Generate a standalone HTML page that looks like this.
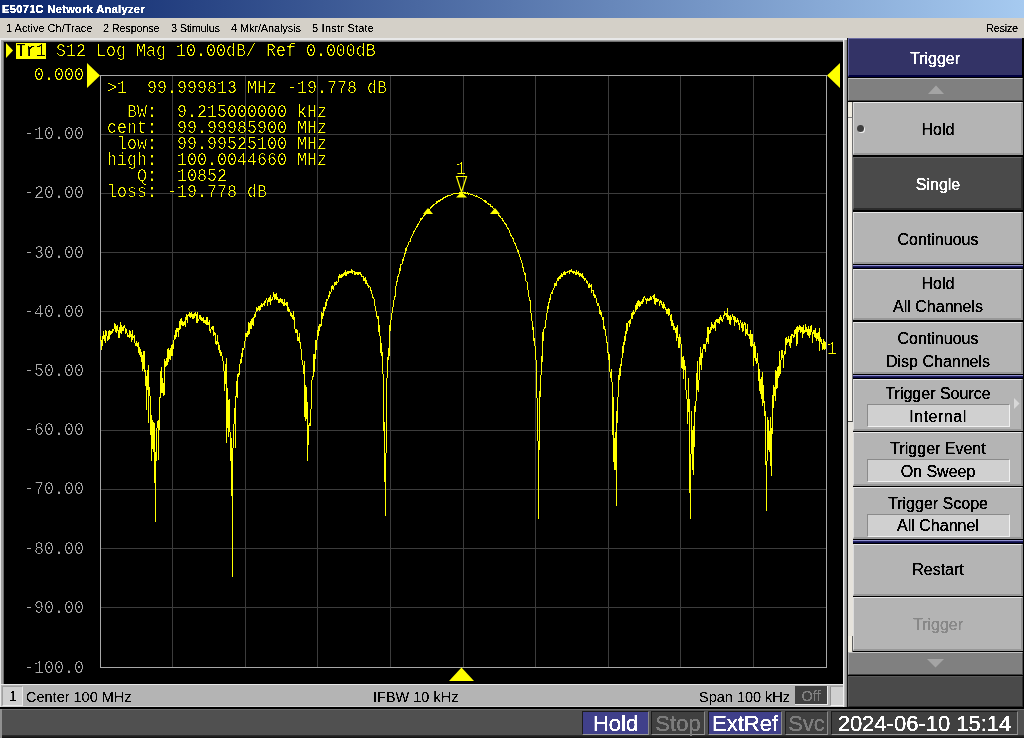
<!DOCTYPE html>
<html><head><meta charset="utf-8">
<style>
*{margin:0;padding:0;box-sizing:border-box}
html,body{width:1024px;height:738px;overflow:hidden;background:#d4d0c8;position:relative}
div{position:absolute}
.sans{font-family:"Liberation Sans",sans-serif}
.mono{font-family:"Liberation Mono",monospace;font-size:16.67px;line-height:20px;color:#ffff00;white-space:pre;transform:scaleY(1.09);transform-origin:0 0}
#title{left:0;top:0;width:1024px;height:18px;background:linear-gradient(to right,#0a246a,#a6caf0)}
#title span{position:absolute;left:2px;top:2px;font:bold 11px "Liberation Sans",sans-serif;letter-spacing:0.36px;color:#fff;line-height:14px;white-space:nowrap}
#menu{left:0;top:18px;width:1024px;height:20px;background:#d4d0c8;font:11px "Liberation Sans",sans-serif;color:#000}
#menu span{position:absolute;top:4px;line-height:12px;white-space:nowrap}
#chart{left:4px;top:42px;width:839px;height:642px;background:#000;overflow:hidden}
.sk{left:853px;width:171px;background:#b4b4b4;border-top:1px solid #e8e8e8;border-left:1px solid #d8d8d8;border-right:2px solid #404040;border-bottom:1px solid #404040;font:16px "Liberation Sans",sans-serif;color:#000;text-align:center}
.sk.dark{background:#4a4a4a;color:#fff;border-top-color:#909090;border-left-color:#707070;border-right-color:#202020;border-bottom-color:#202020}
.sk .l{position:absolute;left:0;width:100%;line-height:18px;white-space:nowrap}
.sk .box{position:absolute;left:13px;width:143px;height:22px;background:#d2d2d2;border-top:1px solid #909090;border-left:1px solid #909090;border-bottom:1px solid #f0f0f0;border-right:1px solid #f0f0f0;line-height:20px}
.skt{left:853px;width:170px;text-align:center;font:16px "Liberation Sans",sans-serif;line-height:18px;white-space:nowrap}
.bt{top:711px;height:24px;font:22px "Liberation Sans",sans-serif;line-height:22px;padding-top:1px;border-top:1px solid #1c1c1c;border-left:1px solid #1c1c1c;border-bottom:1px solid #9a9a9a;border-right:1px solid #8a8a8a;text-align:center;white-space:nowrap;overflow:hidden}
</style></head><body>
<div id="title"></div>
<div id="menu"></div>








<div style="left:0;top:38px;width:848px;height:669px;background:#e8e8e8"></div>
<div style="left:1px;top:40px;width:846px;height:645px;background:#a0a0a0"></div>
<div style="left:3px;top:41px;width:842px;height:643px;background:#707070"></div>
<div style="left:843px;top:40px;width:1px;height:667px;background:#f0f0f0"></div>
<div style="left:844px;top:40px;width:3px;height:667px;background:linear-gradient(to right,#c8c8c8,#808080)"></div>
<div style="left:847px;top:38px;width:1px;height:669px;background:#101010"></div>
<div id="chart"></div>
<svg style="position:absolute;left:0;top:0" width="1024" height="738" viewBox="0 0 1024 738">
<g stroke="#3c3c3c" stroke-width="1" shape-rendering="crispEdges">
<line x1="172.5" y1="75.0" x2="172.5" y2="667.0"/>
<line x1="100.0" y1="134.5" x2="826.0" y2="134.5"/>
<line x1="245.5" y1="75.0" x2="245.5" y2="667.0"/>
<line x1="100.0" y1="193.5" x2="826.0" y2="193.5"/>
<line x1="317.5" y1="75.0" x2="317.5" y2="667.0"/>
<line x1="100.0" y1="252.5" x2="826.0" y2="252.5"/>
<line x1="390.5" y1="75.0" x2="390.5" y2="667.0"/>
<line x1="100.0" y1="311.5" x2="826.0" y2="311.5"/>
<line x1="463.5" y1="75.0" x2="463.5" y2="667.0"/>
<line x1="100.0" y1="371.5" x2="826.0" y2="371.5"/>
<line x1="535.5" y1="75.0" x2="535.5" y2="667.0"/>
<line x1="100.0" y1="430.5" x2="826.0" y2="430.5"/>
<line x1="608.5" y1="75.0" x2="608.5" y2="667.0"/>
<line x1="100.0" y1="489.5" x2="826.0" y2="489.5"/>
<line x1="680.5" y1="75.0" x2="680.5" y2="667.0"/>
<line x1="100.0" y1="548.5" x2="826.0" y2="548.5"/>
<line x1="753.5" y1="75.0" x2="753.5" y2="667.0"/>
<line x1="100.0" y1="607.5" x2="826.0" y2="607.5"/>
</g>
<rect x="100.5" y="75.5" width="726" height="592" fill="none" stroke="#a8a8a8" stroke-width="1" shape-rendering="crispEdges"/>
<polyline fill="none" stroke="#ffff00" stroke-width="1" shape-rendering="crispEdges" points="100.00,340.16 100.45,336.50 100.91,338.22 101.36,348.25 101.81,349.84 102.27,340.97 102.72,336.80 103.18,337.53 103.63,330.81 104.08,335.42 104.54,335.37 104.99,341.15 105.44,342.01 105.90,329.74 106.35,335.77 106.81,332.07 107.26,341.31 107.71,336.43 108.17,339.98 108.62,337.02 109.08,329.57 109.53,339.27 109.98,334.70 110.44,331.54 110.89,334.60 111.34,332.19 111.80,332.20 112.25,329.37 112.70,332.52 113.16,329.39 113.61,329.90 114.07,328.40 114.52,328.51 114.97,323.49 115.43,332.30 115.88,325.00 116.34,330.23 116.79,333.22 117.24,324.63 117.70,330.80 118.15,330.70 118.60,334.61 119.06,338.04 119.51,326.75 119.97,333.95 120.42,326.32 120.87,322.10 121.33,329.82 121.78,334.01 122.23,328.13 122.69,326.77 123.14,331.00 123.59,330.07 124.05,325.24 124.50,325.64 124.96,327.51 125.41,334.01 125.86,331.58 126.32,328.64 126.77,332.21 127.22,334.31 127.68,335.98 128.13,335.72 128.59,336.17 129.04,335.86 129.49,329.65 129.95,337.66 130.40,331.46 130.85,333.72 131.31,335.49 131.76,340.65 132.22,339.71 132.67,329.77 133.12,337.93 133.58,337.00 134.03,337.05 134.49,334.85 134.94,342.94 135.39,345.63 135.85,343.61 136.30,345.64 136.75,341.07 137.21,344.91 137.66,345.79 138.12,347.30 138.57,342.21 139.02,353.34 139.48,354.04 139.93,347.35 140.38,354.51 140.84,352.94 141.29,361.64 141.75,352.17 142.20,356.52 142.65,370.77 143.11,368.11 143.56,361.17 144.01,350.67 144.47,362.45 144.92,370.44 145.38,379.54 145.83,370.00 146.28,409.57 146.74,376.39 147.19,385.19 147.64,390.09 148.10,364.83 148.55,422.88 149.00,392.92 149.46,395.72 149.91,387.21 150.37,429.02 150.82,415.65 151.27,461.49 151.73,415.21 152.18,423.02 152.63,429.81 153.09,452.42 153.54,445.18 154.00,422.43 154.45,451.03 154.90,471.33 155.36,521.90 155.81,452.24 156.26,460.84 156.72,430.50 157.17,426.66 157.63,421.06 158.08,420.69 158.53,459.68 158.99,430.83 159.44,406.78 159.89,407.03 160.35,370.61 160.80,388.00 161.26,393.13 161.71,366.89 162.16,384.59 162.62,388.35 163.07,393.20 163.53,383.51 163.98,395.95 164.43,390.07 164.89,358.68 165.34,366.74 165.79,365.58 166.25,365.36 166.70,358.27 167.16,365.24 167.61,362.42 168.06,347.78 168.52,361.87 168.97,349.56 169.42,358.69 169.88,354.00 170.33,348.38 170.78,360.21 171.24,351.35 171.69,345.09 172.15,344.95 172.60,356.39 173.05,348.60 173.51,344.84 173.96,340.01 174.41,339.80 174.87,337.60 175.32,329.65 175.78,339.05 176.23,335.84 176.68,327.83 177.14,328.83 177.59,330.48 178.05,332.01 178.50,337.09 178.95,328.86 179.41,321.39 179.86,330.03 180.31,326.42 180.77,320.24 181.22,318.05 181.68,321.26 182.13,325.92 182.58,321.17 183.04,325.58 183.49,321.94 183.94,323.06 184.40,324.38 184.85,323.39 185.31,317.46 185.76,327.26 186.21,314.15 186.67,318.83 187.12,316.28 187.57,322.94 188.03,314.70 188.48,315.33 188.94,314.75 189.39,313.84 189.84,315.92 190.30,318.08 190.75,314.39 191.20,312.13 191.66,316.07 192.11,316.64 192.56,318.80 193.02,314.01 193.47,315.79 193.93,318.93 194.38,313.16 194.83,315.82 195.29,315.05 195.74,311.94 196.19,315.26 196.65,319.64 197.10,323.42 197.56,311.99 198.01,319.19 198.46,319.87 198.92,320.33 199.37,315.24 199.82,317.70 200.28,315.12 200.73,318.89 201.19,321.17 201.64,316.77 202.09,318.34 202.55,320.71 203.00,320.66 203.45,316.57 203.91,323.33 204.36,320.81 204.82,320.20 205.27,320.22 205.72,322.82 206.18,324.47 206.63,317.24 207.08,318.84 207.54,316.61 207.99,324.48 208.45,324.74 208.90,322.80 209.35,320.50 209.81,330.16 210.26,332.12 210.72,332.61 211.17,327.53 211.62,328.65 212.08,329.36 212.53,328.97 212.98,325.88 213.44,329.11 213.89,335.90 214.34,333.40 214.80,332.39 215.25,334.38 215.71,343.52 216.16,344.74 216.61,344.31 217.07,340.91 217.52,335.15 217.97,343.74 218.43,342.45 218.88,348.88 219.34,352.49 219.79,344.68 220.24,356.38 220.70,352.57 221.15,354.12 221.60,352.57 222.06,355.97 222.51,360.73 222.97,361.19 223.42,362.45 223.87,361.11 224.33,391.23 224.78,370.86 225.24,383.61 225.69,379.37 226.14,358.23 226.60,443.04 227.05,391.11 227.50,388.54 227.96,426.66 228.41,436.50 228.87,400.86 229.32,399.25 229.77,405.34 230.23,456.04 230.68,461.33 231.13,437.82 231.59,457.01 232.04,498.79 232.50,576.70 232.95,451.06 233.40,431.40 233.86,427.88 234.31,415.71 234.76,409.52 235.22,407.54 235.67,448.05 236.12,382.13 236.58,380.66 237.03,397.57 237.49,374.13 237.94,377.27 238.39,376.62 238.85,372.90 239.30,375.15 239.75,365.78 240.21,363.03 240.66,359.21 241.12,362.61 241.57,353.23 242.02,356.85 242.48,354.16 242.93,348.33 243.38,349.45 243.84,349.52 244.29,345.39 244.75,344.18 245.20,338.86 245.65,334.65 246.11,332.88 246.56,337.32 247.01,334.37 247.47,330.69 247.92,337.27 248.38,325.83 248.83,323.25 249.28,323.97 249.74,333.86 250.19,323.22 250.64,329.41 251.10,318.91 251.55,328.49 252.01,324.70 252.46,317.72 252.91,322.41 253.37,326.25 253.82,319.26 254.28,313.87 254.73,317.97 255.18,316.82 255.64,312.31 256.09,312.02 256.54,307.96 257.00,308.26 257.45,310.86 257.90,311.04 258.36,305.88 258.81,309.81 259.27,310.32 259.72,305.70 260.17,307.86 260.63,309.75 261.08,303.79 261.53,302.63 261.99,307.29 262.44,304.67 262.90,304.51 263.35,303.33 263.80,303.68 264.26,305.89 264.71,301.84 265.16,302.29 265.62,300.91 266.07,299.50 266.53,298.85 266.98,299.49 267.43,306.30 267.89,302.31 268.34,299.57 268.79,297.64 269.25,301.34 269.70,300.97 270.16,295.48 270.61,304.85 271.06,299.62 271.52,300.30 271.97,299.64 272.42,299.48 272.88,297.28 273.33,296.58 273.79,292.35 274.24,294.94 274.69,298.81 275.15,298.21 275.60,296.57 276.06,293.37 276.51,299.42 276.96,298.27 277.42,299.70 277.87,296.94 278.32,302.54 278.78,299.49 279.23,302.99 279.69,299.72 280.14,298.80 280.59,301.77 281.05,301.61 281.50,299.03 281.95,302.16 282.41,301.00 282.86,302.77 283.31,305.33 283.77,304.54 284.22,299.12 284.68,305.01 285.13,304.90 285.58,302.66 286.04,305.18 286.49,305.41 286.94,301.83 287.40,305.48 287.85,310.86 288.31,307.27 288.76,311.81 289.21,311.82 289.67,308.77 290.12,312.47 290.57,314.05 291.03,316.16 291.48,314.96 291.94,317.11 292.39,314.60 292.84,318.00 293.30,320.30 293.75,311.46 294.20,321.04 294.66,325.91 295.11,329.63 295.57,330.77 296.02,333.23 296.47,329.78 296.93,330.80 297.38,330.49 297.84,339.34 298.29,338.43 298.74,341.43 299.20,333.41 299.65,342.37 300.10,343.08 300.56,341.93 301.01,349.38 301.47,353.97 301.92,359.94 302.37,362.44 302.83,363.83 303.28,367.53 303.73,374.40 304.19,360.90 304.64,398.22 305.10,421.32 305.55,390.10 306.00,384.70 306.46,418.91 306.91,404.10 307.36,402.43 307.82,460.80 308.27,425.28 308.73,425.28 309.18,425.28 309.63,423.34 310.09,425.28 310.54,425.28 310.99,410.09 311.45,384.20 311.90,380.29 312.36,378.80 312.81,376.94 313.26,376.97 313.72,353.83 314.17,354.86 314.62,371.92 315.08,357.08 315.53,353.04 315.99,339.97 316.44,349.95 316.89,343.68 317.35,331.76 317.80,330.56 318.25,336.03 318.71,325.68 319.16,330.90 319.62,324.54 320.07,326.83 320.52,325.51 320.98,326.72 321.43,313.26 321.88,312.54 322.34,314.79 322.79,318.55 323.25,313.12 323.70,306.77 324.15,311.02 324.61,307.17 325.06,309.15 325.51,301.82 325.97,305.59 326.42,305.29 326.88,298.68 327.33,300.00 327.78,299.51 328.24,297.86 328.69,294.60 329.14,297.23 329.60,292.48 330.05,293.29 330.50,293.30 330.96,292.05 331.41,291.63 331.87,286.46 332.32,284.85 332.77,288.32 333.23,287.75 333.68,288.84 334.13,285.28 334.59,284.66 335.04,281.85 335.50,284.19 335.95,285.15 336.40,281.63 336.86,282.29 337.31,282.89 337.76,282.29 338.22,281.24 338.67,280.84 339.13,274.14 339.58,275.72 340.03,278.42 340.49,275.08 340.94,278.35 341.39,275.76 341.85,273.99 342.30,276.94 342.76,274.52 343.21,273.69 343.66,275.73 344.12,274.09 344.57,272.51 345.02,272.39 345.48,271.37 345.93,275.47 346.39,274.80 346.84,272.90 347.29,271.76 347.75,273.05 348.20,272.04 348.65,273.16 349.11,272.80 349.56,271.98 350.02,271.46 350.47,272.51 350.92,271.68 351.38,269.57 351.83,271.97 352.28,273.94 352.74,271.13 353.19,271.95 353.65,271.22 354.10,272.11 354.55,271.46 355.01,275.05 355.46,272.67 355.91,272.25 356.37,272.78 356.82,272.69 357.28,274.71 357.73,272.08 358.18,272.15 358.64,274.20 359.09,273.49 359.55,273.24 360.00,271.96 360.45,274.73 360.91,274.26 361.36,277.03 361.81,274.48 362.27,276.99 362.72,276.77 363.18,276.44 363.63,279.81 364.08,280.66 364.54,278.59 364.99,279.37 365.44,277.29 365.90,282.50 366.35,281.56 366.81,284.41 367.26,282.66 367.71,285.08 368.17,285.82 368.62,286.83 369.07,286.19 369.53,286.82 369.98,286.99 370.44,290.38 370.89,289.70 371.34,293.40 371.80,290.12 372.25,297.85 372.70,297.55 373.16,298.07 373.61,297.82 374.06,299.31 374.52,301.76 374.97,306.27 375.43,306.93 375.88,309.76 376.33,313.43 376.79,314.97 377.24,318.00 377.69,318.12 378.15,317.59 378.60,329.41 379.06,332.45 379.51,324.63 379.96,334.09 380.42,351.81 380.87,351.32 381.32,356.09 381.78,342.55 382.23,359.70 382.69,363.83 383.14,378.32 383.59,392.38 384.05,435.43 384.50,422.25 384.95,475.76 385.41,515.60 385.86,480.08 386.32,399.15 386.77,378.80 387.22,377.37 387.68,357.13 388.13,360.15 388.58,348.00 389.04,355.72 389.49,336.74 389.95,325.51 390.40,330.86 390.85,321.81 391.31,317.91 391.76,316.33 392.21,311.05 392.67,308.66 393.12,306.71 393.58,301.97 394.03,299.42 394.48,295.99 394.94,297.99 395.39,291.64 395.84,286.60 396.30,285.01 396.75,281.95 397.21,281.75 397.66,278.07 398.11,275.26 398.57,276.20 399.02,273.80 399.47,268.16 399.93,270.57 400.38,270.59 400.84,264.81 401.29,264.78 401.74,264.99 402.20,263.16 402.65,259.91 403.11,260.22 403.56,258.17 404.01,257.37 404.47,254.53 404.92,253.32 405.37,253.56 405.83,249.42 406.28,250.28 406.74,248.56 407.19,245.40 407.64,246.01 408.10,245.12 408.55,244.02 409.00,241.89 409.46,241.83 409.91,241.76 410.37,240.23 410.82,238.74 411.27,237.42 411.73,237.38 412.18,235.29 412.63,234.75 413.09,234.17 413.54,232.78 414.00,230.62 414.45,231.06 414.90,230.08 415.36,228.68 415.81,228.43 416.26,227.26 416.72,226.49 417.17,226.62 417.62,224.88 418.08,224.74 418.53,223.86 418.99,222.96 419.44,222.79 419.89,221.15 420.35,220.42 420.80,219.09 421.25,219.70 421.71,218.97 422.16,217.39 422.62,218.29 423.07,217.17 423.52,215.63 423.98,216.04 424.43,214.08 424.88,214.70 425.34,214.38 425.79,213.35 426.25,212.81 426.70,212.48 427.15,211.92 427.61,211.16 428.06,210.87 428.51,210.57 428.97,209.69 429.42,209.25 429.88,209.34 430.33,208.14 430.78,207.84 431.24,206.85 431.69,207.07 432.14,206.84 432.60,206.32 433.05,205.19 433.51,205.01 433.96,204.82 434.41,204.79 434.87,204.20 435.32,203.62 435.77,203.06 436.23,203.03 436.68,202.09 437.14,202.26 437.59,201.44 438.04,201.97 438.50,200.97 438.95,200.96 439.40,201.19 439.86,200.01 440.31,200.12 440.77,199.30 441.22,199.71 441.67,199.09 442.13,198.69 442.58,199.02 443.03,198.36 443.49,197.84 443.94,198.02 444.40,197.73 444.85,197.04 445.30,196.24 445.76,197.04 446.21,196.50 446.66,196.62 447.12,195.78 447.57,196.20 448.03,195.78 448.48,195.32 448.93,195.80 449.39,195.16 449.84,195.24 450.30,195.50 450.75,195.03 451.20,194.71 451.66,194.73 452.11,194.20 452.56,194.42 453.02,194.15 453.47,193.96 453.93,193.39 454.38,193.69 454.83,194.00 455.29,193.26 455.74,193.57 456.19,193.46 456.65,193.80 457.10,193.49 457.56,193.28 458.01,193.73 458.46,193.34 458.92,193.20 459.37,193.38 459.82,192.75 460.28,192.66 460.73,193.48 461.19,193.63 461.64,193.47 462.09,192.72 462.55,193.43 463.00,193.17 463.45,192.74 463.91,192.96 464.36,192.91 464.81,193.19 465.27,192.64 465.72,193.43 466.18,193.70 466.63,193.39 467.08,192.70 467.54,193.12 467.99,193.71 468.44,194.18 468.90,193.79 469.35,193.76 469.81,193.84 470.26,194.15 470.71,194.52 471.17,194.51 471.62,194.36 472.07,194.22 472.53,194.46 472.98,194.97 473.44,195.11 473.89,194.87 474.34,195.06 474.80,195.39 475.25,196.38 475.70,196.31 476.16,195.88 476.61,195.95 477.07,196.35 477.52,196.66 477.97,196.91 478.43,197.02 478.88,197.80 479.33,197.81 479.79,197.66 480.24,198.17 480.70,198.39 481.15,198.61 481.60,198.76 482.06,199.31 482.51,199.76 482.96,199.62 483.42,200.55 483.87,200.36 484.33,201.08 484.78,200.59 485.23,200.50 485.69,201.97 486.14,201.63 486.59,202.44 487.05,202.83 487.50,203.14 487.96,203.23 488.41,203.52 488.86,204.36 489.32,204.72 489.77,204.52 490.22,204.83 490.68,206.09 491.13,206.26 491.59,206.22 492.04,206.26 492.49,207.37 492.95,207.74 493.40,208.71 493.85,208.47 494.31,209.15 494.76,209.96 495.22,210.32 495.67,209.97 496.12,210.75 496.58,211.27 497.03,212.78 497.49,213.46 497.94,214.17 498.39,213.82 498.85,215.15 499.30,215.69 499.75,215.33 500.21,217.25 500.66,216.83 501.12,218.23 501.57,218.27 502.02,217.91 502.48,219.47 502.93,220.42 503.38,221.10 503.84,221.80 504.29,222.66 504.75,223.96 505.20,224.29 505.65,223.91 506.11,224.72 506.56,225.80 507.01,226.94 507.47,227.38 507.92,228.40 508.38,229.03 508.83,229.33 509.28,230.36 509.74,232.15 510.19,233.37 510.64,235.04 511.10,235.13 511.55,235.69 512.00,236.68 512.46,237.60 512.91,238.30 513.37,238.91 513.82,241.71 514.27,242.41 514.73,243.50 515.18,243.38 515.63,243.65 516.09,246.01 516.54,246.98 517.00,248.95 517.45,250.59 517.90,251.61 518.36,250.95 518.81,253.67 519.26,255.17 519.72,255.77 520.17,257.68 520.63,258.16 521.08,260.70 521.53,261.93 521.99,263.24 522.44,266.08 522.89,267.52 523.35,268.00 523.80,270.34 524.26,273.04 524.71,274.17 525.16,272.71 525.62,278.33 526.07,281.31 526.52,281.60 526.98,281.83 527.43,287.08 527.89,289.55 528.34,292.44 528.79,296.84 529.25,297.00 529.70,297.36 530.15,301.79 530.61,305.63 531.06,313.80 531.52,313.51 531.97,320.00 532.42,330.15 532.88,326.82 533.33,327.17 533.78,338.27 534.24,342.95 534.69,337.59 535.15,349.26 535.60,352.06 536.05,360.23 536.51,372.14 536.96,396.99 537.41,404.64 537.87,405.92 538.32,518.60 538.78,470.08 539.23,431.69 539.68,420.13 540.14,380.88 540.59,396.61 541.04,374.23 541.50,355.80 541.95,365.99 542.41,338.86 542.86,331.96 543.31,340.60 543.77,330.31 544.22,327.47 544.67,328.35 545.13,326.95 545.58,327.98 546.04,318.92 546.49,312.65 546.94,314.06 547.40,309.24 547.85,306.48 548.31,308.68 548.76,307.17 549.21,298.08 549.67,302.86 550.12,299.26 550.57,298.48 551.03,293.93 551.48,292.44 551.93,292.27 552.39,292.97 552.84,290.43 553.30,288.94 553.75,290.16 554.20,286.10 554.66,283.31 555.11,286.24 555.57,282.72 556.02,284.06 556.47,284.66 556.93,280.83 557.38,280.47 557.83,278.59 558.29,279.91 558.74,278.20 559.19,276.12 559.65,277.79 560.10,279.01 560.56,275.32 561.01,276.91 561.46,275.17 561.92,273.17 562.37,277.18 562.83,275.47 563.28,274.64 563.73,273.14 564.19,271.42 564.64,274.72 565.09,272.32 565.55,275.43 566.00,271.82 566.45,272.06 566.91,272.16 567.36,271.84 567.82,272.57 568.27,271.78 568.72,271.92 569.18,270.93 569.63,273.56 570.09,271.62 570.54,271.09 570.99,271.60 571.45,270.27 571.90,270.97 572.35,271.83 572.81,271.92 573.26,273.95 573.71,271.66 574.17,272.30 574.62,270.72 575.08,273.68 575.53,271.92 575.98,275.03 576.44,270.37 576.89,274.67 577.35,272.75 577.80,272.96 578.25,272.04 578.71,274.60 579.16,275.69 579.61,272.64 580.07,275.01 580.52,274.07 580.97,275.77 581.43,276.11 581.88,274.44 582.34,274.02 582.79,276.73 583.24,278.54 583.70,276.20 584.15,278.31 584.61,279.78 585.06,278.41 585.51,278.17 585.97,279.90 586.42,282.26 586.87,281.55 587.33,284.31 587.78,280.98 588.24,287.53 588.69,284.73 589.14,283.81 589.60,288.05 590.05,285.67 590.50,286.05 590.96,287.18 591.41,284.48 591.87,290.99 592.32,290.24 592.77,290.57 593.23,290.38 593.68,296.33 594.13,294.20 594.59,294.54 595.04,298.07 595.50,296.31 595.95,297.45 596.40,301.72 596.86,302.58 597.31,303.58 597.76,304.90 598.22,304.70 598.67,303.83 599.12,307.14 599.58,313.81 600.03,309.63 600.49,314.98 600.94,311.67 601.39,316.22 601.85,314.93 602.30,319.55 602.75,319.01 603.21,317.02 603.66,322.88 604.12,330.36 604.57,326.55 605.02,328.77 605.48,331.66 605.93,334.23 606.38,342.93 606.84,342.56 607.29,343.46 607.75,341.88 608.20,359.97 608.65,353.95 609.11,356.55 609.56,354.37 610.01,372.18 610.47,374.18 610.92,377.66 611.38,368.66 611.83,373.97 612.28,393.12 612.74,434.55 613.19,397.46 613.64,433.28 614.10,468.43 614.55,438.45 615.01,470.28 615.46,443.05 615.91,432.21 616.37,505.80 616.82,412.41 617.27,408.49 617.73,422.80 618.18,382.95 618.64,374.60 619.09,380.30 619.54,377.07 620.00,368.06 620.45,376.03 620.90,366.20 621.36,358.84 621.81,366.17 622.27,348.52 622.72,349.90 623.17,343.87 623.63,353.34 624.08,340.64 624.53,345.01 624.99,336.39 625.44,340.83 625.90,333.02 626.35,323.31 626.80,334.02 627.26,327.73 627.71,325.63 628.16,322.13 628.62,322.00 629.07,320.49 629.53,326.60 629.98,321.89 630.43,324.05 630.89,321.79 631.34,313.20 631.79,316.81 632.25,318.74 632.70,314.92 633.16,310.49 633.61,314.60 634.06,312.51 634.52,313.28 634.97,312.63 635.42,307.96 635.88,305.16 636.33,309.61 636.79,303.00 637.24,308.79 637.69,301.44 638.15,304.85 638.60,300.24 639.05,306.93 639.51,301.86 639.96,301.15 640.42,305.23 640.87,305.10 641.32,302.46 641.78,303.56 642.23,299.09 642.68,302.27 643.14,301.10 643.59,300.32 644.05,296.41 644.50,297.66 644.95,298.05 645.41,299.45 645.86,298.51 646.31,303.64 646.77,299.43 647.22,301.32 647.68,298.68 648.13,298.95 648.58,299.99 649.04,298.47 649.49,298.27 649.94,301.07 650.40,297.07 650.85,297.76 651.31,298.95 651.76,297.86 652.21,296.11 652.67,296.41 653.12,296.97 653.57,298.52 654.03,294.53 654.48,295.72 654.94,304.06 655.39,297.81 655.84,305.02 656.30,297.97 656.75,298.16 657.20,300.50 657.66,300.99 658.11,300.17 658.57,299.90 659.02,301.42 659.47,305.74 659.93,304.03 660.38,300.44 660.84,303.10 661.29,303.76 661.74,301.26 662.20,305.37 662.65,307.63 663.10,308.18 663.56,302.39 664.01,308.28 664.47,303.99 664.92,307.61 665.37,309.25 665.83,308.06 666.28,310.81 666.73,313.80 667.19,309.24 667.64,310.06 668.10,314.87 668.55,315.99 669.00,308.51 669.46,314.50 669.91,313.70 670.36,319.73 670.82,320.97 671.27,313.55 671.73,324.25 672.18,326.46 672.63,319.78 673.09,323.72 673.54,327.84 673.99,329.66 674.45,325.68 674.90,327.35 675.36,329.88 675.81,332.96 676.26,326.87 676.72,341.35 677.17,330.50 677.62,325.15 678.08,339.78 678.53,337.55 678.99,347.74 679.44,347.16 679.89,334.28 680.35,343.72 680.80,342.80 681.25,346.01 681.71,366.95 682.16,368.82 682.62,362.52 683.07,356.27 683.52,379.47 683.98,362.16 684.43,370.37 684.88,359.89 685.34,380.37 685.79,388.33 686.25,391.85 686.70,396.14 687.15,400.67 687.61,423.71 688.06,398.46 688.51,378.34 688.97,411.95 689.42,398.59 689.88,483.08 690.33,518.60 690.78,460.49 691.24,447.37 691.69,411.36 692.14,439.82 692.60,430.44 693.05,474.66 693.50,425.65 693.96,452.58 694.41,405.61 694.87,411.54 695.32,411.28 695.77,403.92 696.23,399.17 696.68,391.65 697.13,367.67 697.59,361.25 698.04,391.92 698.50,389.71 698.95,380.27 699.40,378.51 699.86,362.40 700.31,346.94 700.76,359.35 701.22,369.68 701.67,354.91 702.13,352.88 702.58,358.07 703.03,348.94 703.49,347.99 703.94,344.37 704.39,345.28 704.85,347.60 705.30,352.27 705.76,350.11 706.21,338.80 706.66,338.80 707.12,341.69 707.57,335.41 708.02,326.85 708.48,343.89 708.93,329.96 709.39,333.77 709.84,331.24 710.29,331.86 710.75,327.21 711.20,330.17 711.65,322.24 712.11,327.86 712.56,324.71 713.02,325.46 713.47,328.53 713.92,325.10 714.38,327.78 714.83,322.51 715.28,331.40 715.74,320.52 716.19,319.73 716.65,320.52 717.10,322.78 717.55,318.76 718.01,322.98 718.46,318.91 718.91,320.30 719.37,317.38 719.82,323.91 720.28,315.07 720.73,315.01 721.18,321.42 721.64,317.38 722.09,319.71 722.54,321.83 723.00,319.61 723.45,314.67 723.91,316.97 724.36,311.55 724.81,314.89 725.27,314.54 725.72,313.81 726.17,313.88 726.63,315.90 727.08,316.96 727.54,308.31 727.99,319.92 728.44,315.11 728.90,315.45 729.35,317.50 729.80,323.50 730.26,323.95 730.71,314.73 731.17,319.90 731.62,317.79 732.07,316.92 732.53,314.60 732.98,316.25 733.43,319.20 733.89,318.00 734.34,325.85 734.80,315.80 735.25,318.78 735.70,319.19 736.16,323.19 736.61,320.33 737.06,321.88 737.52,317.82 737.97,322.26 738.43,320.18 738.88,323.42 739.33,329.48 739.79,325.55 740.24,320.92 740.69,321.77 741.15,323.95 741.60,326.53 742.06,327.76 742.51,322.47 742.96,331.60 743.42,327.56 743.87,324.96 744.32,322.31 744.78,325.34 745.23,323.15 745.69,335.68 746.14,332.28 746.59,334.08 747.05,328.74 747.50,323.83 747.95,334.51 748.41,334.81 748.86,335.43 749.32,338.04 749.77,338.16 750.22,329.97 750.68,342.20 751.13,346.99 751.59,342.79 752.04,333.85 752.49,345.98 752.95,342.99 753.40,351.68 753.85,366.42 754.31,343.63 754.76,342.84 755.22,360.95 755.67,345.68 756.12,364.05 756.58,361.01 757.03,358.23 757.48,352.76 757.94,362.24 758.39,365.63 758.85,374.96 759.30,390.70 759.75,369.15 760.21,385.91 760.66,394.18 761.11,379.72 761.57,376.87 762.02,399.44 762.48,371.70 762.93,406.20 763.38,384.57 763.84,395.54 764.29,415.74 764.74,400.67 765.20,417.08 765.65,425.77 766.11,475.78 766.56,511.30 767.01,461.55 767.47,433.01 767.92,416.67 768.37,430.29 768.83,449.73 769.28,435.83 769.74,452.26 770.19,417.34 770.64,428.32 771.10,475.78 771.55,428.48 772.00,436.93 772.46,398.39 772.91,394.74 773.37,407.63 773.82,385.44 774.27,394.27 774.73,387.11 775.18,400.51 775.63,369.70 776.09,371.79 776.54,374.27 777.00,388.70 777.45,371.02 777.90,366.88 778.36,366.53 778.81,377.65 779.26,373.08 779.72,350.98 780.17,373.81 780.62,369.84 781.08,358.30 781.53,349.76 781.99,357.89 782.44,352.94 782.89,349.62 783.35,367.76 783.80,357.25 784.25,351.63 784.71,352.14 785.16,353.96 785.62,348.78 786.07,336.77 786.52,344.69 786.98,338.46 787.43,342.61 787.88,342.08 788.34,341.94 788.79,336.27 789.25,342.92 789.70,340.72 790.15,347.79 790.61,335.57 791.06,342.48 791.51,334.37 791.97,334.35 792.42,335.54 792.88,335.93 793.33,335.67 793.78,336.98 794.24,336.35 794.69,330.94 795.14,331.78 795.60,333.98 796.05,328.95 796.51,328.08 796.96,345.62 797.41,334.99 797.87,326.09 798.32,328.52 798.77,332.30 799.23,327.80 799.68,326.04 800.14,326.52 800.59,333.10 801.04,331.93 801.50,327.25 801.95,328.57 802.40,327.97 802.86,338.41 803.31,325.44 803.77,329.19 804.22,331.93 804.67,330.87 805.13,331.84 805.58,324.17 806.03,332.06 806.49,327.18 806.94,331.82 807.40,332.96 807.85,330.54 808.30,326.09 808.76,333.69 809.21,338.40 809.66,328.71 810.12,334.73 810.57,330.20 811.03,325.56 811.48,328.67 811.93,329.27 812.39,342.75 812.84,332.85 813.29,329.87 813.75,332.55 814.20,331.89 814.66,336.89 815.11,328.05 815.56,338.35 816.02,336.16 816.47,340.54 816.92,333.92 817.38,333.95 817.83,337.71 818.29,339.81 818.74,338.45 819.19,327.71 819.65,351.38 820.10,339.96 820.55,336.70 821.01,339.00 821.46,343.47 821.92,341.98 822.37,345.47 822.82,349.67 823.28,347.73 823.73,339.21 824.18,342.34 824.64,349.09 825.09,348.57 825.55,348.85 826.00,342.22"/>
<polygon points="87,63 100,75.5 87,88" fill="#ffff00"/>
<polygon points="840,63 827,75.5 840,88" fill="#ffff00"/>
<polygon points="449,681 474,681 461.5,667.5" fill="#ffff00"/>
<polygon points="456.5,176.5 466.5,176.5 461.5,192" fill="none" stroke="#ffff00" stroke-width="1.2"/>
<polygon points="456,197.5 467,197.5 461.5,192" fill="#ffff00"/>
<polygon points="423,214 433,214 428,208" fill="#ffff00"/>
<polygon points="490,214 500,214 495,208" fill="#ffff00"/>
<polygon points="6,43 13,50.5 6,58" fill="#ffff00"/>
</svg>
<div style="left:16px;top:43px;width:30px;height:16px;background:#ffff00"></div>

<svg width="0" height="0" style="position:absolute"><filter id="thr" x="0" y="0" width="100%" height="100%"><feComponentTransfer><feFuncA type="linear" slope="8" intercept="-5.6"/></feComponentTransfer></filter></svg>
<svg width="0" height="0" style="position:absolute"><filter id="thrk" x="0" y="0" width="100%" height="100%"><feComponentTransfer><feFuncA type="linear" slope="6" intercept="-2.8"/></feComponentTransfer></filter></svg>
<div style="left:0;top:0;width:100px;height:70px;filter:url(#thrk)">
<div class="mono" style="left:16px;top:41px;color:#000">Tr1</div>
</div>
<div style="left:0;top:0;width:848px;height:684px;filter:url(#thr)">
<div class="mono" style="left:56px;top:41px;color:#ffff00">S12&#160;Log&#160;Mag&#160;10.00dB/&#160;Ref&#160;0.000dB</div>
<div class="mono" style="left:34px;top:65px;color:#ffff00">0.000</div>
<div class="mono" style="left:24px;top:124px;color:#a8a8a8">-10.00</div>
<div class="mono" style="left:24px;top:183px;color:#a8a8a8">-20.00</div>
<div class="mono" style="left:24px;top:243px;color:#a8a8a8">-30.00</div>
<div class="mono" style="left:24px;top:302px;color:#a8a8a8">-40.00</div>
<div class="mono" style="left:24px;top:361px;color:#a8a8a8">-50.00</div>
<div class="mono" style="left:24px;top:420px;color:#a8a8a8">-60.00</div>
<div class="mono" style="left:24px;top:479px;color:#a8a8a8">-70.00</div>
<div class="mono" style="left:24px;top:539px;color:#a8a8a8">-80.00</div>
<div class="mono" style="left:24px;top:598px;color:#a8a8a8">-90.00</div>
<div class="mono" style="left:24px;top:658px;color:#a8a8a8">-100.0</div>
<div class="mono" style="left:107px;top:78px;color:#ffff00">&gt;1&#160;&#160;99.999813&#160;MHz&#160;-19.778&#160;dB</div>
<div class="mono" style="left:107px;top:102px;color:#ffff00">&#160;&#160;BW:&#160;&#160;9.215000000&#160;kHz</div>
<div class="mono" style="left:107px;top:118px;color:#ffff00">cent:&#160;&#160;99.99985900&#160;MHz</div>
<div class="mono" style="left:107px;top:134px;color:#ffff00">&#160;low:&#160;&#160;99.99525100&#160;MHz</div>
<div class="mono" style="left:107px;top:150px;color:#ffff00">high:&#160;&#160;100.0044660&#160;MHz</div>
<div class="mono" style="left:107px;top:166px;color:#ffff00">&#160;&#160;&#160;Q:&#160;&#160;10852</div>
<div class="mono" style="left:107px;top:182px;color:#ffff00">loss:&#160;-19.778&#160;dB</div>
<div class="mono" style="left:456px;top:159px;color:#ffff00">1</div>
<div class="mono" style="left:827px;top:339px;color:#ffff00">1</div>
</div>

<div style="left:1px;top:684px;width:842px;height:1px;background:#e8e8e8"></div>
<div style="left:1px;top:685px;width:842px;height:22px;background:#b4b4b4;border-bottom:1px solid #d0d0d0"></div>
<div style="left:2px;top:686px;width:21px;height:20px;background:#d0d0d0;border-top:1px solid #a0a0a0;border-left:1px solid #a0a0a0;border-bottom:1px solid #e8e8e8;border-right:1px solid #e8e8e8"></div>




<div style="left:795px;top:686px;width:33px;height:19px;background:#404040;border-bottom:1px solid #e8e8e8;border-right:1px solid #e8e8e8"></div>

<div style="left:830px;top:686px;width:13px;height:20px;background:#d0d0d0;border-top:1px solid #a0a0a0;border-left:1px solid #909090;border-bottom:1px solid #f0f0f0"></div>

<div style="left:0;top:707px;width:1024px;height:31px;background:#505050;border-top:2px solid #000"></div>
<div style="left:0;top:709px;width:1024px;height:1px;background:#707070"></div>
<div style="left:0;top:735px;width:1024px;height:3px;background:linear-gradient(to bottom,#303030,#101010)"></div>
<div style="left:0;top:709px;width:2px;height:29px;background:#909090"></div>
<div class="bt" style="left:582px;width:67px;background:#40408a"></div>

<div class="bt" style="left:651px;width:54px;background:#404040"></div>

<div class="bt" style="left:708px;width:74px;background:#40408a"></div>

<div class="bt" style="left:785px;width:43px;background:#404040"></div>

<div class="bt" style="left:831px;width:187px;background:#404040"></div>


<div style="left:848px;top:38px;width:176px;height:670px;background:#000"></div>
<div style="left:848px;top:38px;width:174px;height:39px;background:#333366;border-top:1px solid #6a6aa0;border-left:1px solid #6a6aa8;border-bottom:2px solid #000040"></div>

<div style="left:848px;top:78px;width:175px;height:23px;background:#808080;border-top:1px solid #c0c0c0;border-left:1px solid #a8a8a8;border-bottom:1px solid #404040;border-right:1px solid #505050"></div>
<div style="left:848px;top:102px;width:5px;height:550px;background:#e6e3dc"></div>
<div style="left:848px;top:102px;width:5px;height:16px;background:#f0ece0;border-right:1px solid #606060;border-bottom:1px solid #808080"></div>
<div style="left:848px;top:118px;width:5px;height:304px;background:#f4f0e8;border-right:1px solid #707070;border-bottom:1px solid #404040"></div>
<div style="left:848px;top:636px;width:5px;height:16px;background:#f0ece0;border-right:1px solid #606060"></div>
<div style="left:853px;top:102px;width:170px;height:53px;background:#b4b4b4;border-top:1px solid #e8e8e8;border-left:1px solid #dcdcdc;border-right:2px solid #929292;border-bottom:2px solid #989898"></div>
<div style="left:857px;top:125px;width:7px;height:7px;border-radius:50%;background:#404040;box-shadow:1px 1px 0 #f0f0f0"></div>
<div style="left:853px;top:157px;width:170px;height:53px;background:#4a4a4a;border-top:1px solid #6c6c6c;border-left:1px solid #6c6c6c;border-right:2px solid #2c2c2c;border-bottom:2px solid #2c2c2c"></div>
<div style="left:853px;top:212px;width:170px;height:52px;background:#b4b4b4;border-top:1px solid #e8e8e8;border-left:1px solid #dcdcdc;border-right:2px solid #929292;border-bottom:2px solid #989898"></div>
<div style="left:853px;top:264px;width:170px;height:5px;background:linear-gradient(to bottom,#000 0,#000 1px,#9090d0 1px,#9090d0 2px,#30306a 2px,#000040 4px,#000 4px)"></div>
<div style="left:853px;top:269px;width:170px;height:51px;background:#b4b4b4;border-top:1px solid #e8e8e8;border-left:1px solid #dcdcdc;border-right:2px solid #929292;border-bottom:2px solid #989898"></div>
<div style="left:853px;top:322px;width:170px;height:52px;background:#b4b4b4;border-top:1px solid #e8e8e8;border-left:1px solid #dcdcdc;border-right:2px solid #929292;border-bottom:2px solid #989898"></div>
<div style="left:853px;top:374px;width:170px;height:5px;background:linear-gradient(to bottom,#000 0,#000 1px,#9090d0 1px,#9090d0 2px,#30306a 2px,#000040 4px,#000 4px)"></div>
<div style="left:853px;top:379px;width:170px;height:52px;background:#b4b4b4;border-top:1px solid #e8e8e8;border-left:1px solid #dcdcdc;border-right:2px solid #929292;border-bottom:2px solid #989898"></div><div style="left:867px;top:404px;width:143px;height:23px;background:#d0d0d0;border-top:1px solid #8a8a8a;border-left:1px solid #8a8a8a;border-bottom:1px solid #f0f0f0;border-right:1px solid #f0f0f0"></div>
<div style="left:853px;top:432px;width:170px;height:54px;background:#b4b4b4;border-top:1px solid #e8e8e8;border-left:1px solid #dcdcdc;border-right:2px solid #929292;border-bottom:2px solid #989898"></div><div style="left:867px;top:459px;width:143px;height:23px;background:#d0d0d0;border-top:1px solid #8a8a8a;border-left:1px solid #8a8a8a;border-bottom:1px solid #f0f0f0;border-right:1px solid #f0f0f0"></div>
<div style="left:853px;top:487px;width:170px;height:52px;background:#b4b4b4;border-top:1px solid #e8e8e8;border-left:1px solid #dcdcdc;border-right:2px solid #929292;border-bottom:2px solid #989898"></div><div style="left:867px;top:514px;width:143px;height:23px;background:#d0d0d0;border-top:1px solid #8a8a8a;border-left:1px solid #8a8a8a;border-bottom:1px solid #f0f0f0;border-right:1px solid #f0f0f0"></div>
<div style="left:853px;top:539px;width:170px;height:5px;background:linear-gradient(to bottom,#000 0,#000 1px,#9090d0 1px,#9090d0 2px,#30306a 2px,#000040 4px,#000 4px)"></div>
<div style="left:853px;top:544px;width:170px;height:52px;background:#b4b4b4;border-top:1px solid #e8e8e8;border-left:1px solid #dcdcdc;border-right:2px solid #929292;border-bottom:2px solid #989898"></div>
<div style="left:853px;top:597px;width:170px;height:54px;background:#b4b4b4;border-top:1px solid #e8e8e8;border-left:1px solid #dcdcdc;border-right:2px solid #929292;border-bottom:2px solid #989898"></div>
<div style="left:848px;top:652px;width:175px;height:23px;background:#808080;border-top:1px solid #c0c0c0;border-left:1px solid #a8a8a8;border-bottom:1px solid #404040;border-right:1px solid #505050"></div>
<div style="left:848px;top:676px;width:175px;height:31px;background:#4a4a4a;border-top:1px solid #5a5a5a;border-left:1px solid #5a5a5a;border-right:1px solid #2a2a2a;border-bottom:1px solid #2a2a2a"></div>
<svg width="0" height="0" style="position:absolute"><filter id="thr2" x="0" y="0" width="100%" height="100%"><feComponentTransfer><feFuncA type="linear" slope="5" intercept="-0.9"/></feComponentTransfer></filter></svg>
<div style="left:0;top:0;width:1024px;height:738px;filter:url(#thr2)">
<div style="left:2px;top:2px;font:bold 11px 'Liberation Sans',sans-serif;letter-spacing:0.36px;line-height:14px;color:#fff;text-align:left;white-space:nowrap">E5071C Network Analyzer</div><div style="left:582px;top:713px;width:67px;font:22px 'Liberation Sans',sans-serif;line-height:22px;color:#fff;text-align:center;white-space:nowrap">Hold</div><div style="left:651px;top:713px;width:54px;font:22px 'Liberation Sans',sans-serif;line-height:22px;color:#7c7c7c;text-align:center;white-space:nowrap">Stop</div><div style="left:708px;top:713px;width:74px;font:22px 'Liberation Sans',sans-serif;line-height:22px;color:#fff;text-align:center;white-space:nowrap">ExtRef</div><div style="left:785px;top:713px;width:43px;font:22px 'Liberation Sans',sans-serif;line-height:22px;color:#7c7c7c;text-align:center;white-space:nowrap">Svc</div><div style="left:831px;top:713px;width:187px;font:22px 'Liberation Sans',sans-serif;line-height:22px;color:#fff;text-align:center;white-space:nowrap">2024-06-10 15:14</div><div style="left:848px;top:50px;width:174px;font:16px 'Liberation Sans',sans-serif;line-height:18px;color:#fff;text-align:center;white-space:nowrap">Trigger</div><div style="left:853px;top:121px;width:170px;font:16px 'Liberation Sans',sans-serif;line-height:18px;color:#000;text-align:center;white-space:nowrap">Hold</div><div style="left:853px;top:176px;width:170px;font:16px 'Liberation Sans',sans-serif;line-height:18px;color:#fff;text-align:center;white-space:nowrap">Single</div><div style="left:853px;top:231px;width:170px;font:16px 'Liberation Sans',sans-serif;line-height:18px;color:#000;text-align:center;white-space:nowrap">Continuous</div><div style="left:853px;top:275px;width:170px;font:16px 'Liberation Sans',sans-serif;line-height:18px;color:#000;text-align:center;white-space:nowrap">Hold</div><div style="left:853px;top:298px;width:170px;font:16px 'Liberation Sans',sans-serif;line-height:18px;color:#000;text-align:center;white-space:nowrap">All Channels</div><div style="left:853px;top:330px;width:170px;font:16px 'Liberation Sans',sans-serif;line-height:18px;color:#000;text-align:center;white-space:nowrap">Continuous</div><div style="left:853px;top:353px;width:170px;font:16px 'Liberation Sans',sans-serif;line-height:18px;color:#000;text-align:center;white-space:nowrap">Disp Channels</div><div style="left:853px;top:385px;width:170px;font:16px 'Liberation Sans',sans-serif;line-height:18px;color:#000;text-align:center;white-space:nowrap">Trigger Source</div><div style="left:853px;top:408px;width:170px;font:16px 'Liberation Sans',sans-serif;letter-spacing:0.5px;line-height:18px;color:#000;text-align:center;white-space:nowrap">Internal</div><div style="left:853px;top:440px;width:170px;font:16px 'Liberation Sans',sans-serif;line-height:18px;color:#000;text-align:center;white-space:nowrap">Trigger Event</div><div style="left:853px;top:463px;width:170px;font:16px 'Liberation Sans',sans-serif;line-height:18px;color:#000;text-align:center;white-space:nowrap">On Sweep</div><div style="left:853px;top:495px;width:170px;font:16px 'Liberation Sans',sans-serif;line-height:18px;color:#000;text-align:center;white-space:nowrap">Trigger Scope</div><div style="left:853px;top:517px;width:170px;font:16px 'Liberation Sans',sans-serif;line-height:18px;color:#000;text-align:center;white-space:nowrap">All Channel</div><div style="left:853px;top:561px;width:170px;font:16px 'Liberation Sans',sans-serif;line-height:18px;color:#000;text-align:center;white-space:nowrap">Restart</div><div style="left:853px;top:616px;width:170px;font:16px 'Liberation Sans',sans-serif;line-height:18px;color:#888;text-align:center;white-space:nowrap">Trigger</div>
</div>
<svg width="0" height="0" style="position:absolute"><filter id="thr3" x="0" y="0" width="100%" height="100%"><feComponentTransfer><feFuncA type="linear" slope="5" intercept="-1.7"/></feComponentTransfer></filter></svg>
<div style="left:0;top:0;width:1024px;height:738px;filter:url(#thr3)">
<div style="left:6px;top:22px;font:11px 'Liberation Sans',sans-serif;line-height:12px;color:#000;text-align:left;white-space:nowrap">1 Active Ch/Trace</div><div style="left:103px;top:22px;font:11px 'Liberation Sans',sans-serif;letter-spacing:-0.22px;line-height:12px;color:#000;text-align:left;white-space:nowrap">2 Response</div><div style="left:171px;top:22px;font:11px 'Liberation Sans',sans-serif;letter-spacing:-0.26px;line-height:12px;color:#000;text-align:left;white-space:nowrap">3 Stimulus</div><div style="left:231px;top:22px;font:11px 'Liberation Sans',sans-serif;letter-spacing:-0.12px;line-height:12px;color:#000;text-align:left;white-space:nowrap">4 Mkr/Analysis</div><div style="left:312px;top:22px;font:11px 'Liberation Sans',sans-serif;letter-spacing:0.22px;line-height:12px;color:#000;text-align:left;white-space:nowrap">5 Instr State</div><div style="left:986px;top:22px;font:11px 'Liberation Sans',sans-serif;letter-spacing:-0.3px;line-height:12px;color:#000;text-align:left;white-space:nowrap">Resize</div><div style="left:3px;top:687px;width:20px;font:14px 'Liberation Sans',sans-serif;line-height:19px;color:#000;text-align:center;white-space:nowrap">1</div><div style="left:26px;top:689px;font:14.5px 'Liberation Sans',sans-serif;line-height:16px;color:#000;text-align:left;white-space:nowrap">Center 100 MHz</div><div style="left:373px;top:689px;font:14.5px 'Liberation Sans',sans-serif;line-height:16px;color:#000;text-align:left;white-space:nowrap">IFBW 10 kHz</div><div style="left:699px;top:689px;font:14.5px 'Liberation Sans',sans-serif;line-height:16px;color:#000;text-align:left;white-space:nowrap">Span 100 kHz</div><div style="left:795px;top:687px;width:32px;font:14.5px 'Liberation Sans',sans-serif;line-height:19px;color:#808080;text-align:center;white-space:nowrap">Off</div>
</div>
<svg style="position:absolute;left:0;top:0" width="1024" height="738"><polygon points="928,94 936,85.5 944,94" fill="#a4a4a4"/><polygon points="927,659 944,659 935.5,667.5" fill="#a4a4a4"/><polygon points="1014,398 1019.5,403.5 1014,409" fill="#d8d8d8"/></svg>
</body></html>
